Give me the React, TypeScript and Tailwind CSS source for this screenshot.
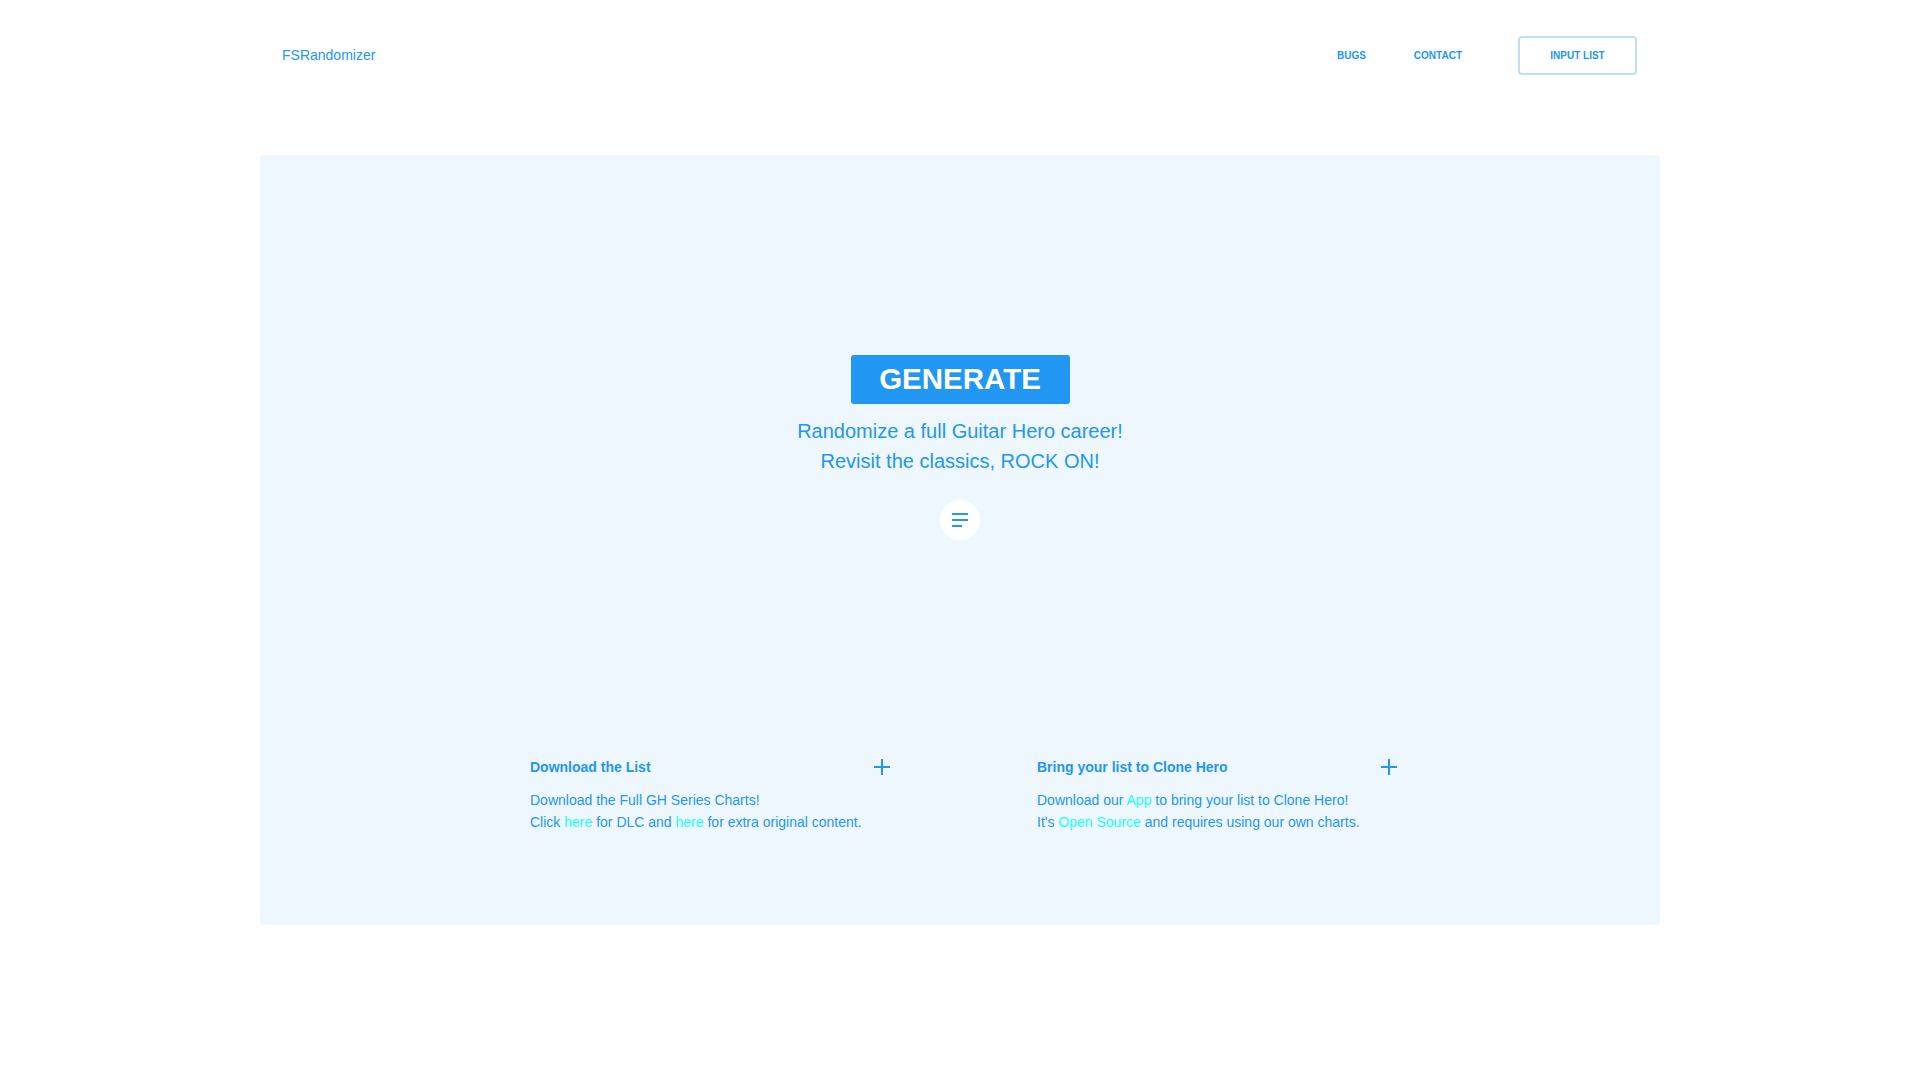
import React from 'react';

const blue = 'text-[#2196f3]';

const PlusIcon: React.FC = () => (
  <svg width="16" height="16" viewBox="0 0 16 16" className="shrink-0">
    <path d="M8 0v16M0 8h16" stroke="#2196f3" strokeWidth="2" />
  </svg>
);

const InfoColumn: React.FC<{ title: string; children: React.ReactNode }> = ({ title, children }) => (
  <div className="w-[360px]">
    <div className="flex h-[20px] items-center justify-between">
      <h3 className={`text-[14px] font-bold leading-[20px] ${blue}`}>{title}</h3>
      <PlusIcon />
    </div>
    <div className={`mt-[12px] text-[14px] leading-[22px] ${blue}`}>{children}</div>
  </div>
);

const Link: React.FC<{ children: React.ReactNode }> = ({ children }) => (
  <a className="cursor-pointer text-[#18ffff]">{children}</a>
);

const App: React.FC = () => {
  return (
    <div className="min-h-screen bg-white" style={{ fontFamily: '"Liberation Sans", Arial, sans-serif' }}>
      <div className="mx-auto w-[1400px]">
        {/* Header */}
        <header className="flex h-[111px] items-center justify-between pl-[22px] pr-[23px]">
          <a className={`text-[14px] ${blue}`}>FSRandomizer</a>
          <nav className="flex items-center">
            <a className={`px-6 text-[10px] font-bold ${blue}`}>BUGS</a>
            <a className={`px-6 text-[10px] font-bold ${blue}`}>CONTACT</a>
            <button className={`ml-8 flex h-[39px] w-[119px] items-center justify-center rounded-[4px] border-2 border-[#bbdefb] text-[10px] font-bold ${blue}`}>
              INPUT LIST
            </button>
          </nav>
        </header>

        {/* Main panel */}
        <main className="mt-[44px] h-[770px] rounded-[3px] bg-[#eff7fe] pt-[200px]">
          <div className="flex flex-col items-center">
            <button className="flex h-[49px] w-[219px] items-center justify-center rounded-[3px] bg-[#2196f3] text-[29.5px] font-bold text-white">
              GENERATE
            </button>
            <p className={`mt-[12px] text-center text-[20px] leading-[30px] ${blue}`}>
              Randomize a full Guitar Hero career!
              <br />
              Revisit the classics, ROCK ON!
            </p>
            <button className="mt-[24px] flex h-[40px] w-[40px] items-center justify-center rounded-full bg-white">
              <svg width="16" height="14" viewBox="0 0 16 14">
                <path d="M0 1h16M0 7h16M0 13h10" stroke="#2196f3" strokeWidth="2" />
              </svg>
            </button>
          </div>

          <div className="mt-[217px] flex gap-[147px] pl-[270px]">
            <InfoColumn title="Download the List">
              <p>Download the Full GH Series Charts!</p>
              <p>
                Click <Link>here</Link> for DLC and <Link>here</Link> for extra original content.
              </p>
            </InfoColumn>
            <InfoColumn title="Bring your list to Clone Hero">
              <p>
                Download our <Link>App</Link> to bring your list to Clone Hero!
              </p>
              <p>
                It's <Link>Open Source</Link> and requires using our own charts.
              </p>
            </InfoColumn>
          </div>
        </main>
      </div>
    </div>
  );
};

export default App;
